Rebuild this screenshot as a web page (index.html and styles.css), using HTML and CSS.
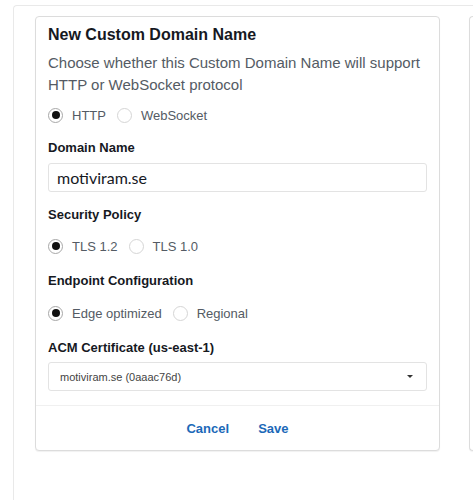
FILE: index.html
```html
<!DOCTYPE html>
<html lang="en">
<head>
<meta charset="utf-8">
<title>New Custom Domain Name</title>
<link rel="stylesheet" href="styles.css">
</head>
<body>
<div class="outer">
  <div class="card">
    <div class="card-body">
      <h2 class="title">New Custom Domain Name</h2>
      <p class="desc">Choose whether this Custom Domain Name will support HTTP or WebSocket protocol</p>
      <div class="radios first">
        <label class="radio"><span class="dot on"></span>HTTP</label>
        <label class="radio"><span class="dot"></span>WebSocket</label>
      </div>

      <div class="label l-domain">Domain Name</div>
      <div class="input">motiviram.se</div>

      <div class="label l-sec">Security Policy</div>
      <div class="radios r-sec">
        <label class="radio"><span class="dot on"></span>TLS 1.2</label>
        <label class="radio"><span class="dot"></span>TLS 1.0</label>
      </div>

      <div class="label l-end">Endpoint Configuration</div>
      <div class="radios r-end">
        <label class="radio"><span class="dot on"></span>Edge optimized</label>
        <label class="radio"><span class="dot"></span>Regional</label>
      </div>

      <div class="label l-acm">ACM Certificate (us-east-1)</div>
      <div class="select">
        <span>motiviram.se (0aaac76d)</span>
        <span class="caret"></span>
      </div>
    </div>
    <div class="card-footer">
      <button class="btn">Cancel</button>
      <button class="btn">Save</button>
    </div>
  </div>
  <div class="card side"></div>
</div>
</body>
</html>
```

FILE: styles.css
```css
html, body {
  margin: 0;
  padding: 0;
  background: #ffffff;
  overflow: hidden;
  height: 500px;
}

body {
  font-family: "Liberation Sans", Arial, sans-serif;
  color: #16191f;
}

.outer {
  margin: 5px 0 0 13px;
  width: calc(100% - 13px);
  height: 495px;
  border: 1px solid #e9e9e9;
  border-right: none;
  border-bottom: none;
  border-radius: 4px 0 0 0;
  padding: 10px 0 0 21px;
  display: flex;
  align-items: flex-start;
  gap: 29px;
  box-sizing: border-box;
  overflow: hidden;
}

.card {
  width: 405px;
  height: 435px;
  flex: none;
  box-sizing: border-box;
  border: 1px solid #dcdcdc;
  border-radius: 4px;
  box-shadow: 0 1px 1px rgba(0, 0, 0, 0.06);
  background: #fff;
  display: flex;
  flex-direction: column;
}

.card.side {
  flex: 1;
  width: auto;
  border-right: none;
  border-radius: 4px 0 0 4px;
}

.card-body {
  padding: 8px 12px 14px 12px;
  border-bottom: 1px solid #f0f0f0;
}

.title {
  margin: 0;
  font-size: 16px;
  line-height: 20px;
  font-weight: bold;
  color: #16191f;
}

.desc {
  margin: 7px 0 0 0;
  font-size: 15px;
  line-height: 22px;
  color: #545b64;
}

.radios {
  display: flex;
  align-items: center;
  gap: 11px;
  height: 20px;
  margin-top: 9px;
}

.r-sec { margin-top: 13px; }
.r-end { margin-top: 14px; }

.radio {
  display: flex;
  align-items: center;
  gap: 9px;
  font-size: 13px;
  color: #545b64;
}

.dot {
  width: 15px;
  height: 15px;
  box-sizing: border-box;
  border: 1px solid #d5d5d5;
  border-radius: 50%;
  display: flex;
  align-items: center;
  justify-content: center;
  background: #fff;
}

.dot.on {
  border-color: #a8a8a8;
}

.dot.on::after {
  content: "";
  width: 8px;
  height: 8px;
  border-radius: 50%;
  background: #111;
}

.label {
  font-size: 13px;
  line-height: 16px;
  font-weight: bold;
  color: #16191f;
}

.l-domain { margin-top: 15px; }
.l-sec { margin-top: 15px; }
.l-end { margin-top: 17px; }
.l-acm { margin-top: 17px; }

.input {
  margin-top: 7px;
  height: 29px;
  box-sizing: border-box;
  border: 1px solid #e3e3e3;
  border-radius: 3px;
  padding: 0 8px;
  display: flex;
  align-items: center;
  font-family: Lato, "Liberation Sans", sans-serif;
  font-size: 16px;
  color: #16191f;
}

.select {
  margin-top: 6px;
  height: 29px;
  box-sizing: border-box;
  border: 1px solid #e3e3e3;
  border-radius: 3px;
  padding: 0 11px 0 11px;
  display: flex;
  align-items: center;
  justify-content: space-between;
  font-size: 11px;
  color: #444;
}

.caret {
  width: 0;
  height: 0;
  border-left: 3px solid transparent;
  border-right: 3px solid transparent;
  border-top: 3px solid #333;
  margin-right: 2px;
}

.card-footer {
  flex: 1;
  display: flex;
  align-items: center;
  justify-content: center;
  gap: 29px;
}

.btn {
  background: none;
  border: none;
  padding: 0;
  font-family: "Liberation Sans", Arial, sans-serif;
  font-size: 13px;
  font-weight: bold;
  color: #1b69b8;
  cursor: pointer;
}
```
